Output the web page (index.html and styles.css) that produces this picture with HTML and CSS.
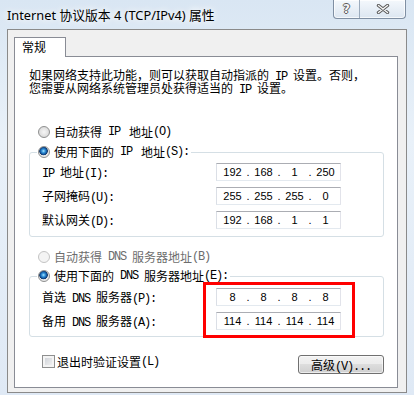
FILE: index.html
```html
<html>
<head>
<meta charset="utf-8">
<title>Internet 协议版本 4 (TCP/IPv4) 属性</title>
<link rel="stylesheet" href="styles.css">
</head>
<body>

<div class="window">
  <div class="titlebar">
    <div class="title">Internet 协议版本 4 (TCP/IPv4) 属性</div>
    <div class="caption-btns">
      <div class="cbtn help">?</div>
      <div class="cbtn close">
        <svg width="14" height="10" viewBox="0 0 14 10">
          <path d="M2.5 1.5 L11.5 8.5 M11.5 1.5 L2.5 8.5" stroke="#5b5b5b" stroke-width="3.4" stroke-linecap="round"/>
          <path d="M2.5 1.5 L11.5 8.5 M11.5 1.5 L2.5 8.5" stroke="#f6f6f6" stroke-width="1.4" stroke-linecap="round"/>
        </svg>
      </div>
    </div>
  </div>

  <div class="client">
    <div class="tab">常规</div>
    <div class="panel">
      <p class="intro">如果网络支持此功能，则可以获取自动指派的<span class="en"> IP </span>设置。否则，<br>您需要从网络系统管理员处获得适当的<span class="en"> IP </span>设置。</p>

      <div class="opt"><span class="radio"></span>自动获得<span class="en wide"> IP </span>地址<span class="en">(O)</span></div>

      <div class="group">
        <div class="group-title"><span class="radio on"></span>使用下面的<span class="en wide"> IP </span>地址<span class="en">(S):</span></div>
        <div class="field">
          <span class="label"><span class="en">IP </span>地址<span class="en">(I):</span></span>
          <div class="ip"><span class="oct">192</span><span class="dot">.</span><span class="oct">168</span><span class="dot">.</span><span class="oct">1</span><span class="dot">.</span><span class="oct">250</span></div>
        </div>
        <div class="field">
          <span class="label">子网掩码<span class="en">(U):</span></span>
          <div class="ip"><span class="oct">255</span><span class="dot">.</span><span class="oct">255</span><span class="dot">.</span><span class="oct">255</span><span class="dot">.</span><span class="oct">0</span></div>
        </div>
        <div class="field">
          <span class="label">默认网关<span class="en">(D):</span></span>
          <div class="ip"><span class="oct">192</span><span class="dot">.</span><span class="oct">168</span><span class="dot">.</span><span class="oct">1</span><span class="dot">.</span><span class="oct">1</span></div>
        </div>
      </div>

      <div class="opt off"><span class="radio"></span>自动获得<span class="en"> DNS </span>服务器地址<span class="en">(B)</span></div>

      <div class="group dns">
        <div class="group-title"><span class="radio on"></span>使用下面的<span class="en"> DNS </span>服务器地址<span class="en">(E):</span></div>
        <div class="field">
          <span class="label">首选<span class="en"> DNS </span>服务器<span class="en">(P):</span></span>
          <div class="ip"><span class="oct">8</span><span class="dot">.</span><span class="oct">8</span><span class="dot">.</span><span class="oct">8</span><span class="dot">.</span><span class="oct">8</span></div>
        </div>
        <div class="field">
          <span class="label">备用<span class="en"> DNS </span>服务器<span class="en">(A):</span></span>
          <div class="ip"><span class="oct">114</span><span class="dot">.</span><span class="oct">114</span><span class="dot">.</span><span class="oct">114</span><span class="dot">.</span><span class="oct">114</span></div>
        </div>
      </div>

      <div class="bottom">
        <div class="check"><span class="box"></span>退出时验证设置<span class="en">(L)</span></div>
        <button class="btn">高级<span class="en">(V)...</span></button>
      </div>
    </div>
  </div>

  <div class="mark"></div>
</div>

</body>
</html>
```

FILE: styles.css
```css
* {
    box-sizing: border-box;
}

body {
    margin: 0;
    width: 414px;
    height: 395px;
    overflow: hidden;
    font-family: "Noto Sans CJK SC", sans-serif;
    font-size: 12px;
    color: #000;
}

.window {
    position: relative;
    height: 395px;
    background: linear-gradient(180deg, #d9e6f3 0%, #e9f1f9 35%, #dfe9f5 100%);
}

/* title bar */
.titlebar {
    height: 29px;
    display: flex;
    align-items: flex-start;
}

.title {
    padding: 7px 0 0 7px;
    font-family: "Noto Sans", "Noto Sans CJK SC", sans-serif;
    font-size: 12.8px;
    line-height: 16px;
    text-shadow: 0 0 6px #fff, 0 0 10px #fff;
}

.caption-btns {
    display: flex;
    height: 19px;
    margin-left: auto;
    margin-right: 8px;
    border: 1px solid #7f8fa3;
    border-top: none;
    border-radius: 0 0 4px 4px;
    background: linear-gradient(#f4f8fc, #dce6f1);
    box-shadow: inset 0 0 0 1px rgba(255, 255, 255, 0.7);
    overflow: hidden;
}

.cbtn {
    display: flex;
    align-items: center;
    justify-content: center;
}

.help {
    width: 26px;
    border-right: 1px solid #9aaabc;
    font: bold 12px "DejaVu Sans", sans-serif;
    color: #f6f6f6;
    text-shadow: 1px 0 #5b5b5b, -1px 0 #5b5b5b, 0 1px #5b5b5b, 0 -1px #5b5b5b;
}

.close {
    width: 45px;
}

/* dialog body */
.client {
    width: 400px;
    height: 364px;
    margin-left: 7px;
    padding: 7px 0 0 6px;
    border: 1px solid #8a8a8a;
    background: #f0f0f0;
}

.tab {
    position: relative;
    z-index: 1;
    width: 52px;
    height: 20px;
    margin-bottom: -1px;
    padding-left: 7px;
    border: 1px solid #898c95;
    border-bottom: none;
    background: #fff;
    line-height: 18px;
}

.panel {
    width: 384px;
    height: 332px;
    padding: 11px 13px 0 14px;
    border: 1px solid #898c95;
    background: #fff;
}

.en {
    font-family: "Liberation Mono", monospace;
    letter-spacing: -1.2px;
    line-height: 0;
    white-space: pre;
}

.en.wide {
    padding-right: 3px;
}

.intro {
    height: 26px;
    margin: 0;
    line-height: 13px;
    white-space: nowrap;
}

.opt {
    display: flex;
    align-items: center;
    height: 16px;
    margin: 30px 0 0 9px;
    line-height: 16px;
}

.opt.off {
    margin-top: 12px;
    color: #6d6d6d;
}

.radio {
    width: 12px;
    height: 12px;
    margin-right: 4px;
    border: 1px solid #8e8f8f;
    border-radius: 50%;
    background: radial-gradient(circle at 50% 50%, #f6f6f6 0, #dcdcdc 70%, #efefef 100%);
}

.radio.on {
    background: radial-gradient(circle at 45% 40%, #b4e6ff 0, #3d9fe2 1.5px, #0e4f98 3.4px, #1a3d6b 4px, #e4e4e4 4.6px, #f6f6f6 100%);
}

.off .radio {
    border-color: #c4c4c4;
    background: #f4f4f4;
}

.group {
    margin-top: 12px;
    padding: 0 42px 7px 12px;
    border: 1px solid #d5dfe5;
    border-radius: 3px;
}

.group.dns {
    margin-top: 11px;
    padding-bottom: 6px;
}

.group-title {
    display: flex;
    align-items: center;
    width: fit-content;
    height: 16px;
    margin: -9px 0 3px -5px;
    padding: 0 2px 0 1px;
    background: #fff;
    line-height: 16px;
}

.dns .group-title {
    margin-bottom: 4px;
}

.field {
    display: flex;
    align-items: center;
    justify-content: space-between;
    height: 18px;
}

.field + .field {
    margin-top: 6px;
}

.label {
    line-height: 16px;
}

.ip {
    display: flex;
    align-items: center;
    width: 125px;
    height: 18px;
    padding-left: 3px;
    border: 1px solid;
    border-color: #abadb3 #e2e3ea #e3e9ef #dbdfe6;
    background: #fff;
    font-family: "Liberation Sans", sans-serif;
    font-size: 11px;
    line-height: 16px;
}

.oct {
    width: 25px;
    text-align: center;
}

.dot {
    width: 6px;
    text-align: center;
}

/* bottom row */
.bottom {
    display: flex;
    align-items: flex-start;
    margin-top: 18px;
    padding-left: 13px;
}

.check {
    display: flex;
    align-items: center;
    height: 13px;
    line-height: 13px;
}

.box {
    width: 13px;
    height: 13px;
    margin-right: 2px;
    border: 1px solid #8e8f8f;
    background: linear-gradient(135deg, #c9cdd3, #f7f7f7);
    box-shadow: inset 0 0 0 2px #f4f4f4;
}

.btn {
    width: 86px;
    height: 19px;
    margin-left: auto;
    padding: 0;
    border: 1px solid #707070;
    border-radius: 3px;
    background: linear-gradient(#f2f2f2 0%, #ebebeb 49%, #dddddd 50%, #cfcfcf 100%);
    box-shadow: inset 0 0 0 1px rgba(255, 255, 255, 0.6);
    font-family: "Noto Sans CJK SC", sans-serif;
    font-size: 12px;
    line-height: 16px;
    color: #000;
}

/* red highlight drawn over the dns boxes */
.mark {
    position: absolute;
    left: 203px;
    top: 282px;
    width: 152px;
    height: 56px;
    border: 3px solid #f00;
}
```
